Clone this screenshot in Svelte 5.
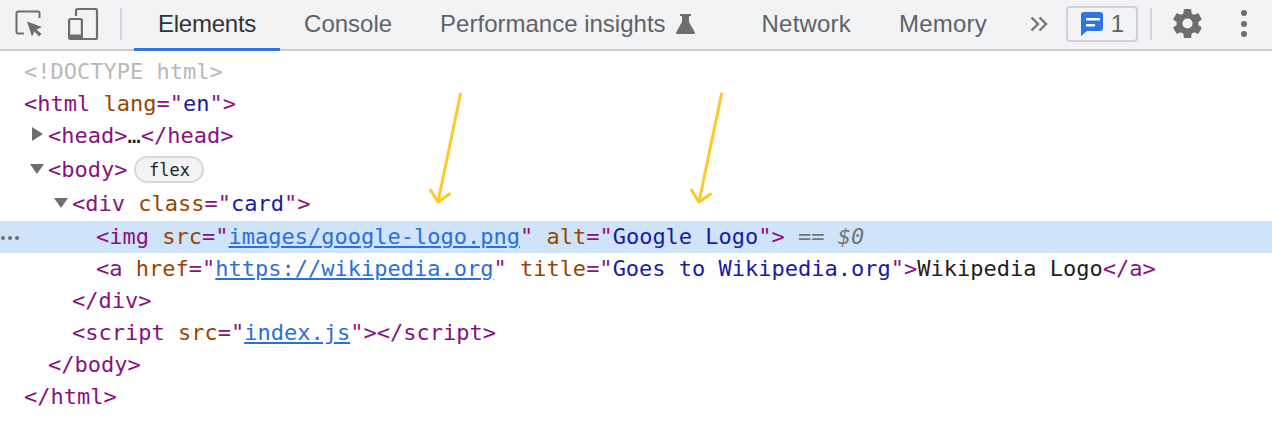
<script>
  const tabs = [
    { label: 'Elements', active: true },
    { label: 'Console' },
    { label: 'Performance insights', flask: true },
    { label: 'Network', wide: true },
    { label: 'Memory', wide: true }
  ];
</script>

<div class="devtools">
  <header class="toolbar">
    <button class="tool inspect" aria-label="Select element">
      <svg width="28" height="29" viewBox="0 0 28 29">
        <path d="M9 24.500H3A1.500 1.500 0 0 1 1.500 23V4A1.500 1.500 0 0 1 3 2.500h20A1.500 1.500 0 0 1 24.500 4v5" fill="none" stroke="#6e6e6e" stroke-width="2"/>
        <path d="M12 12.500 27 18l-5.500 2.500 5 4.500-2.500 2.500-4.500-5-2.500 5z" fill="#6e6e6e"/>
      </svg>
    </button>
    <button class="tool device" aria-label="Toggle device toolbar">
      <svg width="32" height="34" viewBox="0 0 32 34">
        <path d="M9 9V3.500A1.500 1.500 0 0 1 10.500 2h18A1.500 1.500 0 0 1 30 3.500v27a1.500 1.500 0 0 1-1.500 1.500H15" fill="none" stroke="#6e6e6e" stroke-width="2.200"/>
        <rect x="2.100" y="12" width="12.800" height="20" rx="1.500" fill="none" stroke="#6e6e6e" stroke-width="2.200"/>
        <rect x="2" y="27.500" width="13" height="5" fill="#6e6e6e"/>
      </svg>
    </button>
    <span class="divider first"></span>
    <nav class="tabs">
      {#each tabs as tab}
        <div class="tab" class:active={tab.active} class:wide={tab.wide}>
          {tab.label}
          {#if tab.flask}
            <svg class="flask" width="19" height="20" viewBox="0 0 19 20">
              <path d="M4 0h11v2h-2v6l5.700 10a1.200 1.200 0 0 1-1 2H1.300a1.200 1.200 0 0 1-1-2L6 8V2H4z" fill="#6e6e6e"/>
            </svg>
          {/if}
        </div>
      {/each}
    </nav>
    <span class="more">
      <svg width="18" height="16" viewBox="0 0 18 16">
        <path d="M1.500 1.500 8 8l-6.500 6.500M9.500 1.500 16 8l-6.500 6.500" fill="none" stroke="#757575" stroke-width="2.400"/>
      </svg>
    </span>
    <div class="issues">
      <svg width="22" height="24" viewBox="0 0 22 24">
        <path d="M3 0h16a3 3 0 0 1 3 3v13a3 3 0 0 1-3 3H6l-6 5V3a3 3 0 0 1 3-3z" fill="#2f74e6"/>
        <path d="M5 6h14v2.400H5zM5 12h9v2.400H5z" fill="#fff"/>
      </svg>
      <span>1</span>
    </div>
    <span class="divider second"></span>
    <button class="tool gear" aria-label="Settings">
      <svg width="35" height="35" viewBox="0 0 24 24">
        <path d="M19.430 12.980c.04-.32.070-.64.070-.98s-.03-.66-.07-.98l2.110-1.650a.5.500 0 0 0 .12-.64l-2-3.460a.5.500 0 0 0-.61-.22l-2.490 1a7.300 7.300 0 0 0-1.690-.98l-.38-2.650A.49.490 0 0 0 14 2h-4a.49.490 0 0 0-.49.420l-.38 2.650c-.61.250-1.170.59-1.690.98l-2.490-1a.49.490 0 0 0-.61.220l-2 3.460a.49.490 0 0 0 .12.640l2.110 1.650c-.04.320-.07.650-.07.980s.03.660.07.980l-2.110 1.650a.5.500 0 0 0-.12.640l2 3.460c.12.220.39.300.61.220l2.490-1c.52.400 1.080.73 1.690.98l.38 2.650c.03.240.24.420.49.420h4c.25 0 .46-.18.49-.42l.38-2.650c.61-.25 1.170-.59 1.690-.98l2.490 1c.23.090.49 0 .61-.22l2-3.460a.5.500 0 0 0-.12-.64zM12 15.500a3.500 3.500 0 1 1 0-7 3.500 3.500 0 0 1 0 7z" fill="#6e6e6e"/>
      </svg>
    </button>
    <span class="kebab"><i></i><i></i><i></i></span>
  </header>

  <main class="tree">
    <div class="line doctype">&lt;!DOCTYPE html&gt;</div>
    <div class="line"><span class="t">&lt;html</span> <span class="a">lang</span><span class="t">="</span><span class="v">en</span><span class="t">"&gt;</span></div>
    <div class="line i1"><span class="arrow right"></span><span class="t">&lt;head&gt;</span><span class="dots">…</span><span class="t">&lt;/head&gt;</span></div>
    <div class="line i1 bodyline"><span class="arrow down"></span><span class="t">&lt;body&gt;</span><span class="badge">flex</span></div>
    <div class="line i2 divline"><span class="arrow down"></span><span class="t">&lt;div</span> <span class="a">class</span><span class="t">="</span><span class="v">card</span><span class="t">"&gt;</span></div>
    <div class="line i3 selected"><span class="ellipsis"><i></i><i></i><i></i></span><span class="t">&lt;img</span> <span class="a">src</span><span class="t">="</span><a href="#img">images/google-logo.png</a><span class="t">"</span> <span class="a">alt</span><span class="t">="</span><span class="v">Google Logo</span><span class="t">"&gt;</span> <span class="eq">==</span> <em>$0</em></div>
    <div class="line i3"><span class="t">&lt;a</span> <span class="a">href</span><span class="t">="</span><a href="#wiki">https://wikipedia.org</a><span class="t">"</span> <span class="a">title</span><span class="t">="</span><span class="v">Goes to Wikipedia.org</span><span class="t">"&gt;</span>Wikipedia Logo<span class="t">&lt;/a&gt;</span></div>
    <div class="line i2"><span class="t">&lt;/div&gt;</span></div>
    <div class="line i2"><span class="t">&lt;script</span> <span class="a">src</span><span class="t">="</span><a href="#index">index.js</a><span class="t">"&gt;&lt;/script&gt;</span></div>
    <div class="line i1"><span class="t">&lt;/body&gt;</span></div>
    <div class="line"><span class="t">&lt;/html&gt;</span></div>

    <svg class="arrows" width="340" height="130" viewBox="0 0 340 130" aria-hidden="true">
      <g fill="none" stroke="#fcc926" stroke-width="3" stroke-linecap="round" stroke-linejoin="round">
        <path d="M60.500 9 38 117M30.500 105 38 117 49.500 109"/>
        <path d="M321.500 9 299 117M291.500 105 299 117 310.500 109"/>
      </g>
    </svg>
  </main>
</div>

<style>
  :global(body) {
    background: #fff;
  }

  .devtools {
    position: relative;
    height: 424px;
    overflow: hidden;
    background: #fff;
  }

  .toolbar {
    display: flex;
    align-items: center;
    height: 47px;
    padding-bottom: 2px;
    background: #f1f3f4;
    border-bottom: 2px solid #cbcdd1;
    font-family: "Liberation Sans", Arial, sans-serif;
  }

  .tool {
    display: flex;
    padding: 0;
    border: 0;
    background: none;
  }

  .inspect {
    margin-left: 15px;
  }

  .device {
    margin-left: 24px;
  }

  .divider {
    width: 2px;
    height: 32px;
    background: #d4d6d9;
  }

  .divider.first {
    margin-left: 21px;
  }

  .divider.second {
    margin-left: 12px;
  }

  .tabs {
    display: flex;
    align-self: stretch;
    margin-left: 12px;
  }

  .tab {
    position: relative;
    display: flex;
    align-items: center;
    gap: 10px;
    padding: 0 24px;
    font-size: 24px;
    color: #5f6368;
    white-space: nowrap;
  }

  .tab.wide {
    letter-spacing: 0.2px;
  }

  .tab.active {
    color: #333;
    letter-spacing: -0.25px;
  }

  .tab.active::after {
    content: "";
    position: absolute;
    left: 0;
    right: 0;
    bottom: -4px;
    height: 3px;
    background: #2f74e6;
  }

  .flask {
    margin-right: 19px;
  }

  .more {
    display: flex;
    margin-left: 19px;
  }

  .issues {
    display: flex;
    align-items: center;
    gap: 8px;
    box-sizing: border-box;
    width: 72px;
    height: 36px;
    margin-left: 18px;
    padding-left: 13px;
    border: 2px solid #d0d2d5;
    border-radius: 4px;
    font-size: 24px;
    color: #5f6368;
  }

  .gear {
    margin-left: 18px;
  }

  .kebab {
    display: flex;
    flex-direction: column;
    gap: 4.500px;
    margin-left: 36px;
  }

  .kebab i {
    width: 6px;
    height: 6px;
    border-radius: 50%;
    background: #6e6e6e;
  }

  .tree {
    position: relative;
    padding-top: 5px;
    font-family: "DejaVu Sans Mono", monospace;
    font-size: 22px;
    color: #222;
  }

  .line {
    position: relative;
    box-sizing: border-box;
    height: 32px;
    padding-left: 24px;
    line-height: 32px;
    white-space: pre;
  }

  .i1 { padding-left: 48px; }
  .i2 { padding-left: 72px; }
  .i3 { padding-left: 96px; }

  .bodyline {
    height: 36px;
    line-height: 36px;
  }

  .divline {
    height: 33px;
  }

  .doctype {
    color: #b9b9b9;
  }

  .t { color: #881280; }
  .a { color: #994500; }
  .v { color: #1a1aa6; }

  .line a {
    color: #2a6fdb;
    text-decoration: underline;
  }

  .dots {
    color: #222;
  }

  .selected {
    background: #cfe3f9;
  }

  .eq,
  em {
    color: #70757a;
  }

  .arrow {
    position: absolute;
    width: 0;
    height: 0;
    border-style: solid;
    border-color: transparent;
  }

  .arrow.right {
    top: 7px;
    margin-left: -16px;
    border-width: 7px 0 7px 11px;
    border-left-color: #6e6e6e;
  }

  .arrow.down {
    top: 10px;
    margin-left: -18px;
    border-width: 10px 7px 0 7px;
    border-top-color: #6e6e6e;
  }

  .bodyline .arrow.down {
    top: 12px;
  }

  .badge {
    display: inline-block;
    box-sizing: border-box;
    height: 27px;
    margin-left: 7px;
    padding: 0 12.500px;
    border: 2px solid #d6d8da;
    border-radius: 14px;
    background: #f1f3f4;
    font-size: 17px;
    line-height: 24px;
    vertical-align: 1px;
    color: #222;
  }

  .ellipsis {
    position: absolute;
    left: 1px;
    top: 15px;
    display: flex;
    gap: 3px;
  }

  .ellipsis i {
    width: 4px;
    height: 4px;
    border-radius: 50%;
    background: #6e6e6e;
  }

  .arrows {
    position: absolute;
    left: 400px;
    top: 34px;
  }
</style>
